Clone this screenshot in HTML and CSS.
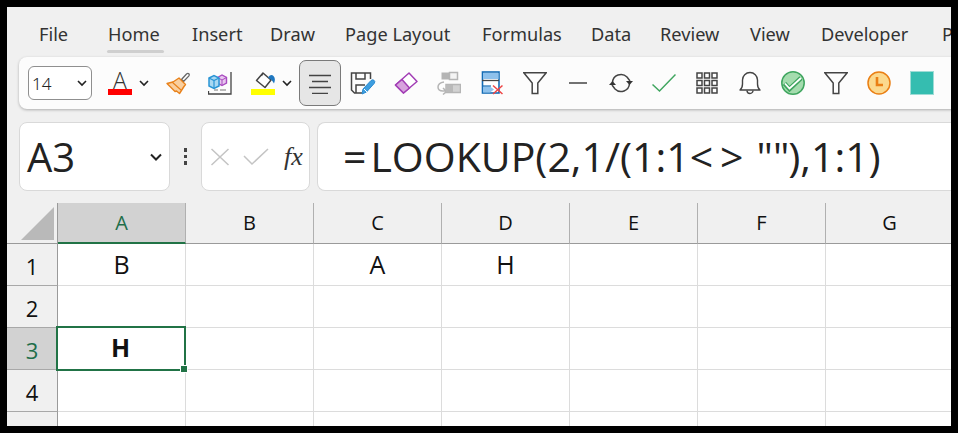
FILE: index.html
```html
<!DOCTYPE html>
<html lang="en">
<head>
<meta charset="utf-8">
<title>LOOKUP</title>
<link rel="stylesheet" href="styles.css">
</head>
<body>
<div class="app">
  <nav class="tabs">
    <span class="tab tab-file">File</span>
    <span class="tab tab-home active">Home</span>
    <span class="tab tab-insert">Insert</span>
    <span class="tab tab-draw">Draw</span>
    <span class="tab tab-layout">Page Layout</span>
    <span class="tab tab-formulas">Formulas</span>
    <span class="tab tab-data">Data</span>
    <span class="tab tab-review">Review</span>
    <span class="tab tab-view">View</span>
    <span class="tab tab-dev">Developer</span>
    <span class="tab tab-last">P</span>
  </nav>

  <div class="toolbar">
    <div class="font-size"><span>14</span>
      <svg class="chev" width="12" height="8" viewBox="0 0 12 8"><path d="M2 2l4 4 4-4" fill="none" stroke="#222" stroke-width="1.6"/></svg>
    </div>
    <div class="color-btn"><span class="color-letter">A</span><span class="bar bar-red"></span></div>
    <div class="mini-chev"><svg width="12" height="8" viewBox="0 0 12 8"><path d="M2 2l4 4 4-4" fill="none" stroke="#222" stroke-width="1.6"/></svg></div>
    <div class="tool tool-brush">
      <svg width="24" height="24" viewBox="0 0 24 24"><path d="M15.5 8.5l5-5.500q1.400-1.200 2.300-.2t-.1 2.300l-5.200 5.400z" fill="#fff" stroke="#666" stroke-width="1.300"/><path d="M13 7l6.500 6.500-1.500 2-4.500 7-3-2.500-1.500.5L1 12.500l6-1.500z" fill="#f9cf9f" stroke="#e8811a" stroke-width="1.400" stroke-linejoin="round"/><path d="M6 11l9 8" stroke="#e8811a" stroke-width="1.200"/></svg>
    </div>
    <div class="tool tool-cube">
      <svg width="24" height="24" viewBox="0 0 24 24"><path d="M23 1v22H.5v-3" fill="none" stroke="#444" stroke-width="1.300"/><path d="M6 19h4M12 19h6" stroke="#777" stroke-width="1.200"/><path d="M9.500 6.500L14 4l4.500 2.500v5.500L14 14.500 9.500 12z" fill="#e7c6ee" stroke="#a94bc0" stroke-width="1.400"/><path d="M9.500 6.500L14 9l4.500-2.500M14 9v5" fill="none" stroke="#a94bc0" stroke-width="1"/><path d="M1 7l5-2.500L11 7v8l-5 2.500L1 15z" fill="#a9d8f2" stroke="#2a95d5" stroke-width="1.500"/><path d="M1 7l5 2.500L11 7M6 9.500v8" fill="none" stroke="#2a95d5" stroke-width="1.200"/></svg>
    </div>
    <div class="color-btn color-fill">
      <svg class="fill-icon" width="24" height="18" viewBox="0 0 24 18"><path d="M3.500 9.500l6.500-7.500 8 7-6 7.500z" fill="#fff" stroke="#444" stroke-width="1.500" stroke-linejoin="round"/><path d="M10 2l-1.500 3" stroke="#444" stroke-width="1.300"/><path d="M15 6.500q3-4 5.500-1.500t.5 7.500q-1-2-2.500-3.500z" fill="#1f77c0"/></svg>
      <span class="bar bar-yellow"></span>
    </div>
    <div class="mini-chev mini-fill"><svg width="12" height="8" viewBox="0 0 12 8"><path d="M2 2l4 4 4-4" fill="none" stroke="#222" stroke-width="1.600"/></svg></div>
    <div class="align-btn">
      <svg width="24" height="22" viewBox="0 0 24 22"><path d="M1 3.500h22M4 9.500h16M1 15.500h22M4 21.500h16" stroke="#444" stroke-width="1.300"/></svg>
    </div>
    <div class="tool tool-after-align">
      <svg width="26" height="24" viewBox="0 0 26 24"><path d="M12 22H4.500L1.500 19V2h19v6" fill="none" stroke="#444" stroke-width="1.500"/><path d="M6 2v6h9V2M6 22v-8h9" fill="none" stroke="#444" stroke-width="1.500"/><path d="M12 23l1-5L21 9.500q1.500-1.300 3-.2t.3 3L16.500 21z" fill="#3d9ee0" stroke="#2a8ad0" stroke-width="1"/><path d="M14 18l3 3" stroke="#fff" stroke-width="1"/></svg>
    </div>
    <div class="tool">
      <svg width="24" height="24" viewBox="0 0 24 24"><path d="M15 2l8 8.500L9.500 22 1.500 14z" fill="#fff" stroke="#a23db5" stroke-width="1.500" stroke-linejoin="round"/><path d="M8 8.500l7.500 8.500-6 5-8-8z" fill="#d7a3dd" stroke="#a23db5" stroke-width="1.500" stroke-linejoin="round"/></svg>
    </div>
    <div class="tool">
      <svg width="24" height="24" viewBox="0 0 24 24"><rect x="4.500" y="1.500" width="8" height="7" fill="#b5b5b5"/><rect x="12.500" y="1.500" width="8" height="7" fill="#f4f4f4" stroke="#b5b5b5" stroke-width="1.500"/><rect x="9" y="13.500" width="14.500" height="8" fill="#d2d2d2" stroke="#b5b5b5" stroke-width="1.500"/><path d="M7 11Q1 12 1 16q0 4 5 4h3M6 17l3.500 3.500L6 23.500" fill="none" stroke="#b5b5b5" stroke-width="1.500"/><rect x="9" y="14" width="7" height="7" fill="#b9b9b9"/></svg>
    </div>
    <div class="tool">
      <svg width="24" height="24" viewBox="0 0 24 24"><rect x="2.500" y="1" width="16.500" height="21" fill="#fff" stroke="#146cb5" stroke-width="1.600"/><rect x="3" y="2" width="15.500" height="6" fill="#8ec1ec"/><path d="M2 9.500h17" stroke="#444" stroke-width="1.300"/><path d="M3 15.500h7l4 3-4 3H3z" fill="#8ec1ec"/><path d="M2 15h9" stroke="#146cb5" stroke-width="1.200"/><path d="M13 14.500l9.500 8.500M22.500 14.500L13 23" stroke="#ee4444" stroke-width="1.500"/></svg>
    </div>
    <div class="tool">
      <svg class="funnel" width="24" height="24" viewBox="0 0 24 24"><path d="M.8 1.800h22.400l-8.400 10.200v10.500H9.200V12z" fill="none" stroke="#444" stroke-width="1.500"/></svg>
    </div>
    <div class="tool">
      <svg width="18" height="2" viewBox="0 0 18 2"><path d="M0 1h18" stroke="#444" stroke-width="1.500"/></svg>
    </div>
    <div class="tool">
      <svg width="24" height="24" viewBox="0 0 24 24"><path d="M3.500 11.500A8.500 8.500 0 0 1 18 6l3 4" fill="none" stroke="#444" stroke-width="1.500"/><path d="M20.500 12.500A8.500 8.500 0 0 1 6 18l-3-4" fill="none" stroke="#444" stroke-width="1.500"/><path d="M17 10h7l-3.500 4zM0 14h7l-3.500-4z" fill="#333"/></svg>
    </div>
    <div class="tool">
      <svg width="24" height="24" viewBox="0 0 24 24"><path d="M.5 13.500l7 6.500L23.500 3.500" fill="none" stroke="#3fa55f" stroke-width="1.500"/></svg>
    </div>
    <div class="tool">
      <svg width="22" height="22" viewBox="0 0 22 22"><path d="M1 1h5v5H1zM8.500 1h5v5h-5zM16 1h5v5h-5zM1 8.500h5v5H1zM8.500 8.500h5v5h-5zM16 8.500h5v5h-5zM1 16h5v5H1zM8.500 16h5v5h-5zM16 16h5v5h-5z" fill="#fff" stroke="#444" stroke-width="1.500"/></svg>
    </div>
    <div class="tool">
      <svg width="22" height="24" viewBox="0 0 22 24"><path d="M1 19q2.500-2 2.500-6V9a7.500 7.500 0 0 1 15 0v4q0 4 2.500 6z" fill="#fff" stroke="#444" stroke-width="1.400" stroke-linejoin="round"/><path d="M8 19.500a3 3 0 0 0 6 0" fill="none" stroke="#444" stroke-width="1.400"/></svg>
    </div>
    <div class="tool">
      <svg width="24" height="24" viewBox="0 0 24 24"><circle cx="12" cy="12" r="11.200" fill="#a4dcae" stroke="#3fa55f" stroke-width="1.500"/><path d="M3.500 12.500l5 5.500L20 7" fill="none" stroke="#3fa55f" stroke-width="4.500"/><path d="M4 12.500l4.500 5L20 7" fill="none" stroke="#fff" stroke-width="1.800"/></svg>
    </div>
    <div class="tool">
      <svg class="funnel" width="24" height="24" viewBox="0 0 24 24"><path d="M.8 1.800h22.400l-8.400 10.200v10.500H9.200V12z" fill="none" stroke="#444" stroke-width="1.500"/></svg>
    </div>
    <div class="tool">
      <svg width="24" height="24" viewBox="0 0 24 24"><circle cx="12" cy="12" r="11" fill="#fbd98e" stroke="#ea7f14" stroke-width="1.500"/><path d="M10 6v8h6" fill="none" stroke="#ea7f14" stroke-width="2.600"/></svg>
    </div>
    <div class="tool">
      <div class="swatch"></div>
    </div>
  </div>

  <div class="formula-row">
    <div class="name-box"><span>A3</span>
      <svg width="14" height="10" viewBox="0 0 14 10"><path d="M2 2.500l5 5 5-5" fill="none" stroke="#222" stroke-width="2"/></svg>
    </div>
    <div class="dots"><i></i><i></i><i></i></div>
    <div class="fx-box">
      <svg width="20" height="18" viewBox="0 0 20 18"><path d="M1.500 1l17 16M18.500 1l-17 16" stroke="#c4c4c4" stroke-width="1.500"/></svg>
      <svg width="26" height="18" viewBox="0 0 26 18"><path d="M1 8l8 8L25 1" fill="none" stroke="#c4c4c4" stroke-width="1.500"/></svg>
      <span class="fx">fx</span>
    </div>
    <div class="formula-box"><span class="eq">=</span>LOOKUP(2,1/(1:1&lt;<span class="gt">&gt;</span><span class="quotes">""</span>),1:1)</div>
  </div>

  <div class="sheet">
    <div class="corner"><div class="corner-tri"></div></div>
    <div class="col-head selected">A</div>
    <div class="col-head">B</div>
    <div class="col-head">C</div>
    <div class="col-head">D</div>
    <div class="col-head">E</div>
    <div class="col-head">F</div>
    <div class="col-head">G</div>

    <div class="row-head">1</div>
    <div class="cell">B</div><div class="cell"></div><div class="cell">A</div><div class="cell">H</div><div class="cell"></div><div class="cell"></div><div class="cell"></div>
    <div class="row-head">2</div>
    <div class="cell"></div><div class="cell"></div><div class="cell"></div><div class="cell"></div><div class="cell"></div><div class="cell"></div><div class="cell"></div>
    <div class="row-head selected-row">3</div>
    <div class="cell active-cell">H<span class="handle"></span></div><div class="cell"></div><div class="cell"></div><div class="cell"></div><div class="cell"></div><div class="cell"></div><div class="cell"></div>
    <div class="row-head">4</div>
    <div class="cell"></div><div class="cell"></div><div class="cell"></div><div class="cell"></div><div class="cell"></div><div class="cell"></div><div class="cell"></div>
    <div class="row-head"></div>
    <div class="cell"></div><div class="cell"></div><div class="cell"></div><div class="cell"></div><div class="cell"></div><div class="cell"></div><div class="cell"></div>
  </div>
</div>
</body>
</html>
```
FILE: styles.css
```css
* { box-sizing: border-box; }
html, body { margin: 0; height: 100%; background: #000; overflow: hidden; }
body { padding: 7px; }
.app {
  width: 944px; height: 419px; background: #f0f0f0; overflow: hidden;
  font-family: "Noto Sans", "Open Sans", sans-serif; color: #222;
  display: flex; flex-direction: column;
}

/* tabs */
.tabs { height: 50px; flex: none; display: flex; position: relative; font-size: 18.200px; color: #333; padding-top: 13px; line-height: 28px; }
.tab { flex: none; white-space: nowrap; position: relative; }
.tab-file { margin-left: 32px; width: 69px; }
.tab-home { width: 84px; }
.tab-insert { width: 78px; }
.tab-draw { width: 75px; }
.tab-layout { width: 137px; }
.tab-formulas { width: 109px; }
.tab-data { width: 69px; }
.tab-review { width: 90px; }
.tab-view { width: 71px; }
.tab-dev { width: 121px; }
.tab-last { width: 12px; }
.active::after { content: ""; position: absolute; left: -1px; width: 57px; top: 30px; height: 3px; background: #cfcfcf; border-radius: 2px; }

/* toolbar */
.toolbar {
  flex: none; height: 52px; margin-left: 12px; width: 946px;
  background: #fcfcfc; border-radius: 8px 0 0 8px;
  box-shadow: 0 1px 3px rgba(0,0,0,.28);
  display: flex; align-items: center; padding-left: 9px;
}
.font-size {
  width: 64px; height: 34px; flex: none; background: #fff; border: 1px solid #8f8f8f; border-radius: 6px;
  display: flex; align-items: center; justify-content: space-between; padding: 0 3px 0 3px;
  font-size: 17px; color: #222; font-family: "Noto Sans", sans-serif; font-weight: 300;
}
.color-btn { flex: none; width: 24px; height: 24px; margin-left: 16px; position: relative; display: flex; flex-direction: column; align-items: center; }
.color-letter { font-family: "Open Sans", sans-serif; font-weight: 300; font-size: 23px; line-height: 18px; height: 18px; color: #333; }
.bar { position: absolute; left: 0; right: 0; bottom: 0; height: 6px; }
.bar-red { background: #ff0000; }
.bar-yellow { background: #ffff00; }
.color-fill { margin-left: 11px; width: 24px; }
.fill-icon { position: absolute; top: 0; left: 2px; }
.mini-chev { flex: none; width: 24px; display: flex; justify-content: center; }
.mini-fill { width: 12px; margin-left: 6px; }
.tool { flex: none; width: 43px; height: 30px; display: flex; align-items: center; justify-content: center; }
.tool-brush { width: 44px; }
.tool-cube { width: 40px; }
.align-btn {
  flex: none; width: 42px; height: 46px; margin-left: 6px;
  background: #e6e6e6; border: 1px solid #7a7a7a; border-radius: 7px;
  display: flex; align-items: center; justify-content: center;
}
.tool-after-align { margin-left: 0.500px; }
.swatch { width: 22px; height: 22px; background: #35bdb0; outline: 1px solid #9fdcd6; }

/* formula row */
.formula-row { flex: none; margin-top: 13px; height: 69px; display: flex; align-items: stretch; }
.name-box {
  flex: none; margin-left: 12px; width: 151px; background: #fff; border: 1px solid #d9d9d9; border-radius: 8px;
  display: flex; align-items: center; justify-content: space-between; padding: 0 6px 0 7px;
  font-size: 40px; color: #222; font-family: "Open Sans", sans-serif;
}
.dots { flex: none; width: 31px; display: flex; flex-direction: column; align-items: center; justify-content: center; gap: 3px; }
.dots i { display: block; width: 3.500px; height: 3.500px; background: #444; }
.fx-box {
  flex: none; width: 109px; background: #fff; border: 1px solid #d9d9d9; border-radius: 8px;
  display: flex; align-items: center; padding-left: 8px;
}
.fx-box svg + svg { margin-left: 13px; }
.fx { margin-left: 15px; font-family: "Liberation Serif", serif; font-style: italic; font-size: 26px; color: #333; }
.formula-box {
  flex: none; margin-left: 7px; width: 640px; background: #fff; border: 1px solid #d9d9d9; border-right: 0; border-radius: 8px 0 0 8px;
  padding-left: 25px; font-size: 41px; line-height: 67px; color: #222; white-space: nowrap; font-family: "Open Sans", sans-serif;
}
.eq { margin-right: 4px; }
.gt { margin-left: 7px; }
.quotes { margin-left: 13px; margin-right: -1px; }

/* sheet */
.sheet {
  flex: none; margin-top: 12px;
  display: grid; grid-template-columns: 51px repeat(7, 128px); grid-template-rows: 41px repeat(4, 42px) 42px;
  width: 946px;
}
.corner { background: #f0f0f0; border-bottom: 1px solid #9a9a9a; border-right: 1px solid #9a9a9a; position: relative; }
.corner-tri { position: absolute; right: 3px; bottom: 3px; width: 33px; height: 33px; background: #b9b9b9; clip-path: polygon(100% 0, 100% 100%, 0 100%); }
.col-head {
  background: #f0f0f0; border-right: 1px solid #b0b0b0; border-bottom: 1px solid #9a9a9a;
  display: flex; align-items: center; justify-content: center; font-size: 20px; color: #111; padding-bottom: 1px;
  font-family: "Open Sans", sans-serif;
}
.col-head.selected { background: #d2d2d2; color: #1e6e4a; border-bottom: 2px solid #217346; border-right-color: #b0b0b0; }
.row-head {
  background: #f0f0f0; border-right: 1px solid #9a9a9a; border-bottom: 1px solid #a8a8a8;
  display: flex; align-items: center; justify-content: center; font-size: 22px; color: #111; padding-top: 2px;
  font-family: "Open Sans", sans-serif;
}
.row-head.selected-row { background: #d2d2d2; color: #1e6e4a; }
.cell {
  background: #fff; border-right: 1px solid #dcdcdc; border-bottom: 1px solid #dcdcdc;
  display: flex; align-items: center; justify-content: center; font-size: 25px; color: #111; padding-bottom: 2px;
  position: relative; font-family: "Open Sans", sans-serif;
}
.active-cell { font-weight: 700; margin: -1px 1px 0 -1px; outline: 2px solid #217346; outline-offset: -1px; z-index: 2; }
.handle { position: absolute; right: -3px; bottom: -3px; width: 6px; height: 6px; background: #217346; outline: 1px solid #fff; }
```
